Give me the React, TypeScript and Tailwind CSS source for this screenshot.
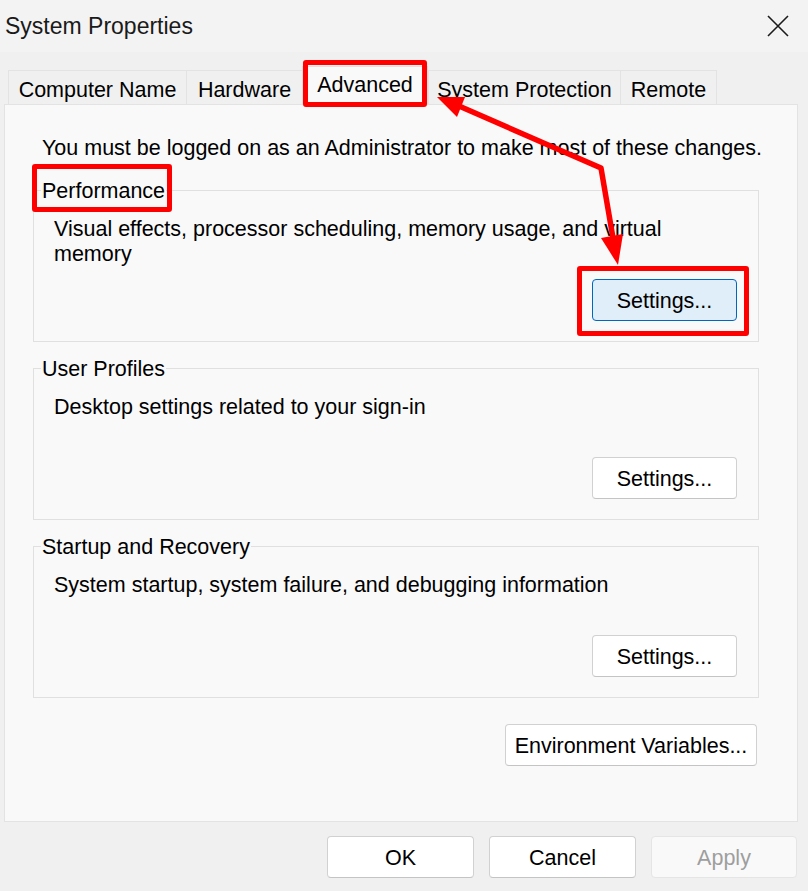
import React from "react";

const font = "font-['Liberation_Sans',Arial,sans-serif]";

const tabs = [
  { label: "Computer Name", w: "w-[178px]" },
  { label: "Hardware", w: "w-[116px]" },
  { label: "Advanced", w: "w-[126px]", active: true },
  { label: "System Protection", w: "w-[192px]" },
  { label: "Remote", w: "w-[97px]", last: true },
];

const WinButton = ({
  label,
  className = "",
  focused = false,
  disabled = false,
}: {
  label: string;
  className?: string;
  focused?: boolean;
  disabled?: boolean;
}) => (
  <button
    className={`flex h-[42px] items-center justify-center rounded-[4px] border pt-[3px] text-[21.5px] leading-none ${
      focused
        ? "border-[#0067c0] bg-[#e0eef9] text-black"
        : disabled
          ? "border-[#e5e5e5] bg-[#f9f9f9] text-[#9e9e9e]"
          : "border-[#d1d1d1] border-b-[#c4c4c4] bg-white text-black"
    } ${className}`}
  >
    {label}
  </button>
);

const Group = ({
  title,
  text,
  focused = false,
}: {
  title: string;
  text: string;
  focused?: boolean;
}) => (
  <fieldset className="w-[726px] border border-[#e0e0e0] pr-[21px] pb-[20px] pl-[7px]">
    <legend className="px-px pt-[2px] text-[21.5px] leading-[25px]">
      {title}
    </legend>
    <div className="mt-[13px] ml-[13px] min-h-[50px] w-[640px] text-[21.5px] leading-[25px]">
      {text}
    </div>
    <div className="mt-[12px] flex justify-end">
      <WinButton label="Settings..." focused={focused} className="w-[145px]" />
    </div>
  </fieldset>
);

const Arrow = () => (
  <svg
    className="pointer-events-none absolute top-0 left-0 z-20"
    width="808"
    height="891"
    viewBox="0 0 808 891"
  >
    <polyline
      points="459,106 601,168 613,238"
      fill="none"
      stroke="#ff0000"
      strokeWidth="5.5"
      strokeLinejoin="round"
    />
    <polygon points="437,97 465,97 457,117" fill="#ff0000" />
    <polygon points="618,265 623,234 601,238" fill="#ff0000" />
  </svg>
);

export default function App() {
  return (
    <div
      className={`relative h-[891px] w-[808px] overflow-hidden bg-[#f0f0f0] text-black ${font}`}
    >
      {/* title bar */}
      <div className="flex h-[52px] items-center justify-between bg-[#f3f3f3] pr-[19px] pl-[5px]">
        <span className="text-[23px] leading-none text-[#1a1a1a]">
          System Properties
        </span>
        <svg width="22" height="22" viewBox="0 0 22 22">
          <path
            d="M1 1 L21 21 M21 1 L1 21"
            stroke="#1b1b1b"
            strokeWidth="1.6"
            fill="none"
          />
        </svg>
      </div>

      <div className="px-[4px]">
        {/* tabs */}
        <div className="mt-[14px] flex h-[38px] items-end pl-[4px]">
          {tabs.map((t) =>
            t.active ? (
              <div
                key={t.label}
                className={`relative z-10 -mb-px flex h-[39px] items-start justify-center border-x border-t border-[#e0e0e0] bg-[#f9f9f9] pt-[6px] text-[21.5px] leading-[25px] ${t.w}`}
              >
                {t.label}
              </div>
            ) : (
              <div
                key={t.label}
                className={`flex h-[34px] items-start justify-center border-t border-l border-[#e3e3e3] bg-[#f0f0f0] pt-[7px] text-[21.5px] leading-[25px] ${
                  t.last ? "border-r" : ""
                } ${t.w}`}
              >
                {t.label}
              </div>
            ),
          )}
        </div>

        {/* panel */}
        <div className="flex h-[718px] w-[794px] flex-col border border-[#e3e3e3] bg-[#f9f9f9] pt-[31px] pl-[28px]">
          <div className="mb-[16px] ml-[9px] text-[21.5px] leading-[25px]">
            You must be logged on as an Administrator to make most of these
            changes.
          </div>
          <div className="flex flex-col gap-[13px]">
            <Group
              title="Performance"
              text="Visual effects, processor scheduling, memory usage, and virtual memory"
              focused
            />
            <Group
              title="User Profiles"
              text="Desktop settings related to your sign-in"
            />
            <Group
              title="Startup and Recovery"
              text="System startup, system failure, and debugging information"
            />
          </div>
          <div className="mt-[26px] flex w-[724px] justify-end">
            <WinButton
              label="Environment Variables..."
              className="h-[41px] w-[252px]"
            />
          </div>
        </div>
      </div>

      {/* footer */}
      <div className="mt-[14px] flex justify-end gap-[15px] pr-[11px]">
        <WinButton label="OK" className="h-[41px] w-[147px]" />
        <WinButton label="Cancel" className="h-[41px] w-[147px]" />
        <WinButton label="Apply" className="h-[41px] w-[146px]" disabled />
      </div>

      {/* annotations */}
      <div className="pointer-events-none absolute top-[60px] left-[303px] z-20 h-[47px] w-[124px] rounded-[3px] border-[5px] border-[#ff0000]" />
      <div className="pointer-events-none absolute top-[164px] left-[32px] z-20 h-[48px] w-[140px] rounded-[3px] border-[5px] border-[#ff0000]" />
      <div className="pointer-events-none absolute top-[266px] left-[577px] z-20 h-[70px] w-[172px] rounded-[3px] border-[5px] border-[#ff0000]" />
      <Arrow />
    </div>
  );
}
